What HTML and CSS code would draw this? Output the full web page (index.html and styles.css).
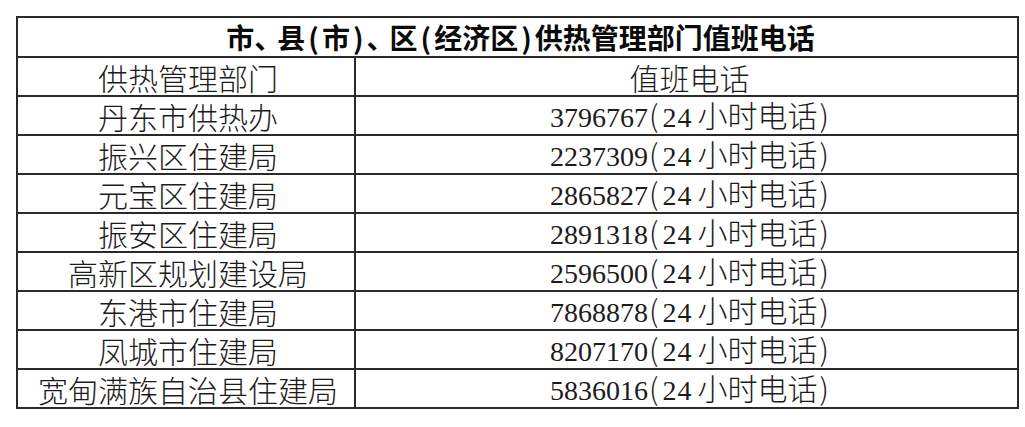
FILE: index.html
```html
<!DOCTYPE html>
<html lang="zh-CN">
<head>
<meta charset="utf-8">
<title>供热管理部门值班电话</title>
<link rel="stylesheet" href="styles.css">
</head>
<body>
<table class="duty">
  <colgroup><col class="c1"><col class="c2"></colgroup>
  <thead>
    <tr class="title-row"><th class="title" colspan="2">市<span class="n">、</span>县<span class="p">(</span>市<span class="p">)</span><span class="n">、</span>区<span class="p">(</span>经济区<span class="p">)</span>供热管理部门值班电话</th></tr>
    <tr><td>供热管理部门</td><td>值班电话</td></tr>
  </thead>
  <tbody>
    <tr><td>丹东市供热办</td><td><span class="num">3796767</span><span class="bl">(</span><span class="num hr">24</span>小时电话<span class="br">)</span></td></tr>
    <tr><td>振兴区住建局</td><td><span class="num">2237309</span><span class="bl">(</span><span class="num hr">24</span>小时电话<span class="br">)</span></td></tr>
    <tr><td>元宝区住建局</td><td><span class="num">2865827</span><span class="bl">(</span><span class="num hr">24</span>小时电话<span class="br">)</span></td></tr>
    <tr><td>振安区住建局</td><td><span class="num">2891318</span><span class="bl">(</span><span class="num hr">24</span>小时电话<span class="br">)</span></td></tr>
    <tr><td>高新区规划建设局</td><td><span class="num">2596500</span><span class="bl">(</span><span class="num hr">24</span>小时电话<span class="br">)</span></td></tr>
    <tr><td>东港市住建局</td><td><span class="num">7868878</span><span class="bl">(</span><span class="num hr">24</span>小时电话<span class="br">)</span></td></tr>
    <tr><td>凤城市住建局</td><td><span class="num">8207170</span><span class="bl">(</span><span class="num hr">24</span>小时电话<span class="br">)</span></td></tr>
    <tr><td>宽甸满族自治县住建局</td><td><span class="num">5836016</span><span class="bl">(</span><span class="num hr">24</span>小时电话<span class="br">)</span></td></tr>
  </tbody>
</table>
</body>
</html>
```
FILE: styles.css
```css
html, body {
  margin: 0;
  padding: 0;
  background: #ffffff;
}
body {
  padding: 16px 0 0 16px;
  font-family: "Noto Sans CJK SC", "Noto Sans", sans-serif;
  color: #1c1c1c;
}
.duty {
  border-collapse: collapse;
  width: 1003px;
  table-layout: fixed;
  border: 2px solid #1a1a1a;
}
.c1 { width: 338px; }
.duty td, .duty th {
  border: 2px solid #2a2a2a;
  height: 37px;
  padding: 0;
  text-align: center;
  vertical-align: middle;
  font-size: 30px;
  font-weight: 300;
  line-height: 30px;
  white-space: nowrap;
}
.duty td:first-child { padding-left: 4px; }
.duty td:last-child { padding-left: 6px; }
.duty tr.title-row th.title {
  height: 38px;
  font-size: 28px;
  font-weight: 700;
  color: #0a0a0a;
  line-height: 30px;
  padding-left: 6px;
}
.title .p { padding: 0 3px; }
.title .n { letter-spacing: -5px; }
.num {
  font-family: "Liberation Serif", serif;
  font-size: 28px;
  font-weight: 400;
}
.num.hr { letter-spacing: 1px; margin-right: 5px; }
.bl { padding: 0 4px 0 1px; }
.br { padding-left: 2px; }
```
